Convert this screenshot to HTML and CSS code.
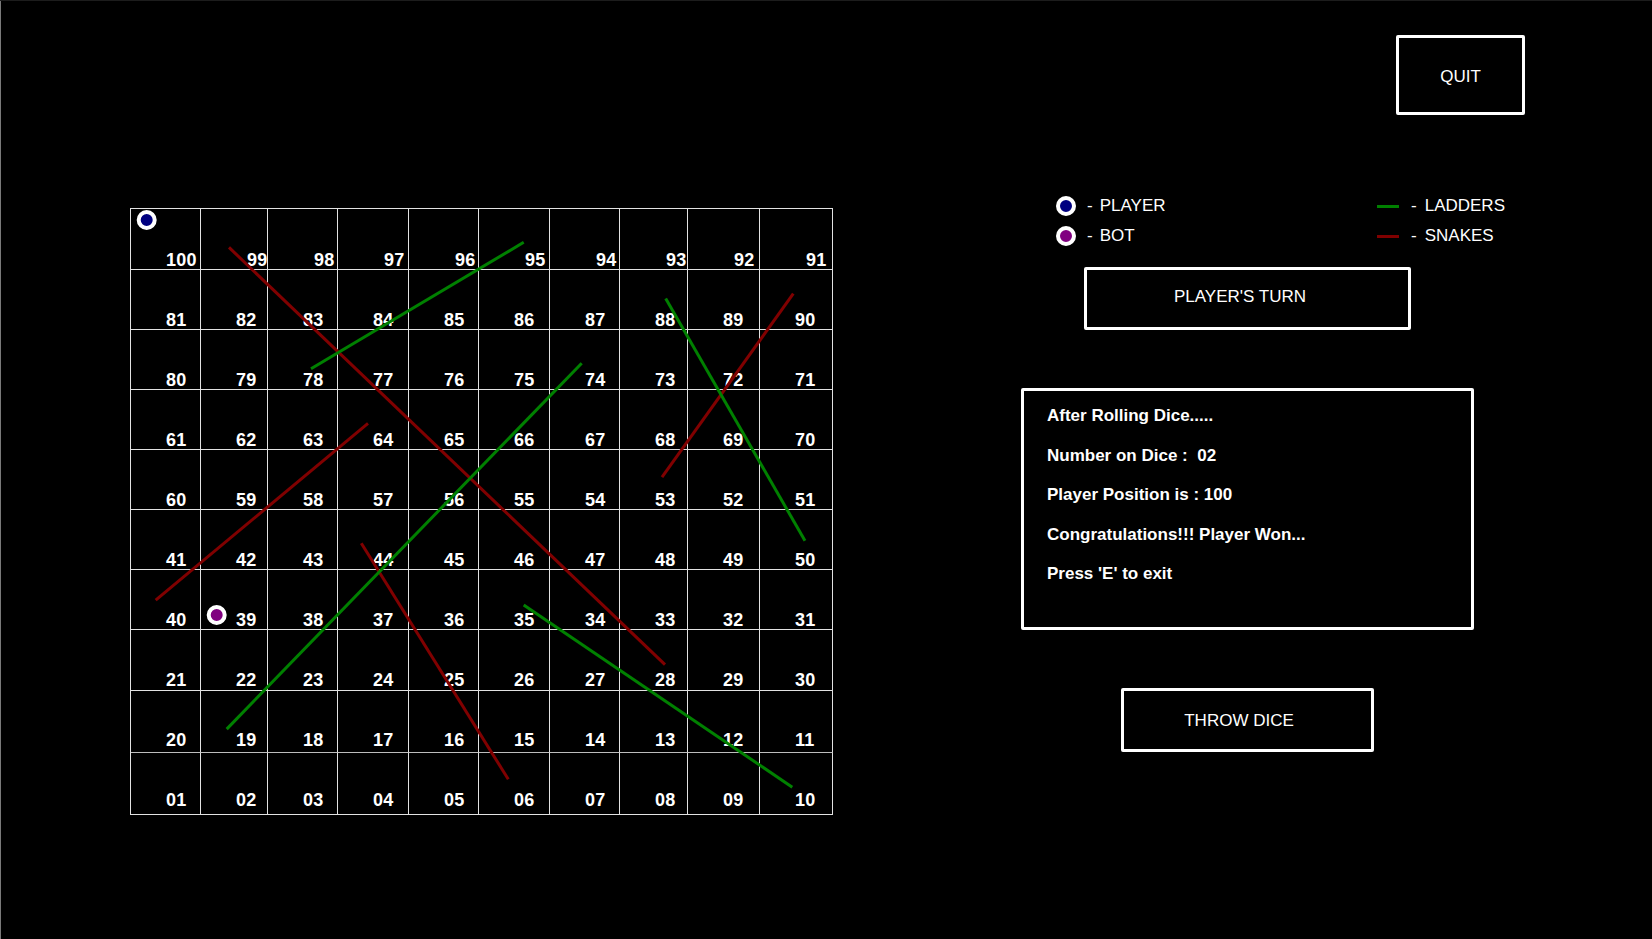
FILE: index.html
```html
<!DOCTYPE html>
<html>
<head>
<meta charset="utf-8">
<title>Snakes and Ladders</title>
<link rel="stylesheet" href="styles.css">
</head>
<body>
<div class="screen">
  <header class="topbar">
    <button class="btn quit">QUIT</button>
  </header>
  <main class="main">
    <section class="board-wrap">
      <div class="board">
        <div class="row r1">
          <div class="cell">100</div><div class="cell top">99</div><div class="cell top">98</div><div class="cell top">97</div><div class="cell top">96</div><div class="cell top">95</div><div class="cell top">94</div><div class="cell top">93</div><div class="cell top">92</div><div class="cell top">91</div>
        </div>
        <div class="row r2">
          <div class="cell">81</div><div class="cell">82</div><div class="cell">83</div><div class="cell">84</div><div class="cell">85</div><div class="cell">86</div><div class="cell">87</div><div class="cell">88</div><div class="cell">89</div><div class="cell">90</div>
        </div>
        <div class="row r3">
          <div class="cell">80</div><div class="cell">79</div><div class="cell">78</div><div class="cell">77</div><div class="cell">76</div><div class="cell">75</div><div class="cell">74</div><div class="cell">73</div><div class="cell">72</div><div class="cell">71</div>
        </div>
        <div class="row r4">
          <div class="cell">61</div><div class="cell">62</div><div class="cell">63</div><div class="cell">64</div><div class="cell">65</div><div class="cell">66</div><div class="cell">67</div><div class="cell">68</div><div class="cell">69</div><div class="cell">70</div>
        </div>
        <div class="row r5">
          <div class="cell">60</div><div class="cell">59</div><div class="cell">58</div><div class="cell">57</div><div class="cell">56</div><div class="cell">55</div><div class="cell">54</div><div class="cell">53</div><div class="cell">52</div><div class="cell">51</div>
        </div>
        <div class="row r6">
          <div class="cell">41</div><div class="cell">42</div><div class="cell">43</div><div class="cell">44</div><div class="cell">45</div><div class="cell">46</div><div class="cell">47</div><div class="cell">48</div><div class="cell">49</div><div class="cell">50</div>
        </div>
        <div class="row r7">
          <div class="cell">40</div><div class="cell">39</div><div class="cell">38</div><div class="cell">37</div><div class="cell">36</div><div class="cell">35</div><div class="cell">34</div><div class="cell">33</div><div class="cell">32</div><div class="cell">31</div>
        </div>
        <div class="row r8">
          <div class="cell">21</div><div class="cell">22</div><div class="cell">23</div><div class="cell">24</div><div class="cell">25</div><div class="cell">26</div><div class="cell">27</div><div class="cell">28</div><div class="cell">29</div><div class="cell">30</div>
        </div>
        <div class="row r9">
          <div class="cell">20</div><div class="cell">19</div><div class="cell">18</div><div class="cell">17</div><div class="cell">16</div><div class="cell">15</div><div class="cell">14</div><div class="cell">13</div><div class="cell">12</div><div class="cell">11</div>
        </div>
        <div class="row r10">
          <div class="cell">01</div><div class="cell">02</div><div class="cell">03</div><div class="cell">04</div><div class="cell">05</div><div class="cell">06</div><div class="cell">07</div><div class="cell">08</div><div class="cell">09</div><div class="cell">10</div>
        </div>
      </div>
      <svg class="overlay" viewBox="130 208 703 607" width="703" height="607" xmlns="http://www.w3.org/2000/svg">
        <g class="snakes" stroke="#800000" stroke-width="3">
          <line x1="229" y1="247.4" x2="665" y2="664.6"/>
          <line x1="793.3" y1="293.7" x2="662" y2="477.2"/>
          <line x1="368" y1="423.4" x2="155.7" y2="600.2"/>
          <line x1="361.3" y1="543.2" x2="508.3" y2="779.3"/>
        </g>
        <g class="ladders" stroke="#008000" stroke-width="3">
          <line x1="311" y1="368.8" x2="523.7" y2="242.3"/>
          <line x1="665.7" y1="298.5" x2="805" y2="540.8"/>
          <line x1="581.7" y1="363.3" x2="226.7" y2="729.1"/>
          <line x1="523.7" y1="604.9" x2="792.3" y2="787.2"/>
        </g>
        <circle cx="146.7" cy="220" r="8" fill="#000080" stroke="#ffffff" stroke-width="4"/>
        <circle cx="216.7" cy="615" r="8" fill="#800080" stroke="#ffffff" stroke-width="4"/>
      </svg>
    </section>
    <aside class="panel">
      <div class="legend">
        <div class="legend-item"><span class="token player"></span><span class="dash">-</span><span class="legend-label">PLAYER</span></div>
        <div class="legend-item"><span class="swatch ladder"></span><span class="dash wide">-</span><span class="legend-label">LADDERS</span></div>
        <div class="legend-item"><span class="token bot"></span><span class="dash">-</span><span class="legend-label">BOT</span></div>
        <div class="legend-item"><span class="swatch snake"></span><span class="dash wide">-</span><span class="legend-label">SNAKES</span></div>
      </div>
      <div class="box turn">PLAYER'S TURN</div>
      <div class="info">
        <div class="info-line">After Rolling Dice.....</div>
        <div class="info-line">Number on Dice :  02</div>
        <div class="info-line">Player Position is : 100</div>
        <div class="info-line">Congratulations!!! Player Won...</div>
        <div class="info-line">Press 'E' to exit</div>
      </div>
      <button class="btn throw">THROW DICE</button>
    </aside>
  </main>
</div>
</body>
</html>
```

FILE: styles.css
```css
html, body {
  margin: 0;
  padding: 0;
  background: #000000;
}

.screen {
  width: 1652px;
  height: 939px;
  overflow: hidden;
  background: #000000;
  box-shadow: inset 0 1px 0 #1c1c1c, inset 1px 0 0 #7a7a7a;
  color: #ffffff;
  font-family: "Liberation Sans", Arial, sans-serif;
  font-size: 17px;
}

.topbar {
  padding-top: 35px;
  padding-left: 1396px;
  height: 80px;
}

.btn {
  display: flex;
  align-items: center;
  justify-content: center;
  box-sizing: border-box;
  margin: 0;
  background: #000000;
  color: #ffffff;
  border: 3px solid #ffffff;
  border-radius: 2px;
  font-family: "Liberation Sans", Arial, sans-serif;
  font-size: 17px;
  cursor: pointer;
}

.quit {
  width: 129px;
  height: 80px;
  padding: 4px 0 0 0;
}

.main {
  display: flex;
  align-items: flex-start;
  margin-top: 81px;
}

.board-wrap {
  position: relative;
  margin-left: 130px;
  margin-top: 12px;
}

.board {
  display: flex;
  flex-direction: column;
  border-left: 1px solid #e2e2e2;
  border-top: 1px solid #e2e2e2;
  width: 702px;
}

.row {
  display: grid;
  grid-template-columns: 70px 67px 70px 71px 70px 71px 70px 68px 72px 73px;
  height: 60px;
}

.r3, .r8 { height: 61px; }
.r9, .r10 { height: 62px; }
.r9 .cell { border-bottom-color: #bdbdbd; }

.cell {
  box-sizing: border-box;
  border-right: 1px solid #e2e2e2;
  border-bottom: 1px solid #e2e2e2;
  padding-top: 42px;
  padding-left: 35px;
  font-family: "Liberation Sans", Arial, sans-serif;
  font-weight: bold;
  font-size: 18px;
  line-height: 18px;
  letter-spacing: 0.2px;
  color: #ffffff;
  white-space: nowrap;
}

.r4 .cell, .r5 .cell, .r6 .cell, .r7 .cell, .r8 .cell { padding-top: 41px; }
.r9 .cell { padding-top: 40px; }
.r10 .cell { padding-top: 38px; }

.cell.top { padding-left: 46px; }

.overlay {
  position: absolute;
  left: 0;
  top: 0;
  pointer-events: none;
}

.panel {
  margin-left: 188px;
  width: 454px;
}

.legend {
  display: grid;
  grid-template-columns: 321px auto;
  row-gap: 10px;
  padding-left: 35px;
}

.legend-item {
  display: flex;
  align-items: center;
  height: 20px;
  white-space: nowrap;
}

.token {
  display: block;
  box-sizing: border-box;
  width: 20px;
  height: 20px;
  border-radius: 50%;
  border: 4px solid #ffffff;
}

.token.player { background: #000080; }
.token.bot { background: #800080; }

.swatch {
  display: block;
  width: 22px;
  height: 3px;
}

.swatch.ladder { background: #008000; }
.swatch.snake { background: #800000; }

.dash {
  margin-left: 11px;
}

.dash.wide {
  margin-left: 12px;
}

.legend-label {
  margin-left: 7px;
}

.dash.wide + .legend-label {
  margin-left: 8px;
}

.box {
  display: flex;
  align-items: center;
  justify-content: center;
  box-sizing: border-box;
  border: 3px solid #ffffff;
  border-radius: 2px;
}

.turn {
  margin-top: 21px;
  margin-left: 63px;
  width: 327px;
  height: 63px;
  padding: 0 15px 4px 0;
}

.info {
  box-sizing: border-box;
  margin-top: 58px;
  width: 453px;
  height: 242px;
  border: 3px solid #ffffff;
  border-radius: 2px;
  padding: 5px 0 0 23px;
  font-weight: bold;
  font-size: 17px;
  line-height: 39.6px;
}

.info-line {
  white-space: pre;
}

.throw {
  margin-top: 58px;
  margin-left: 100px;
  width: 253px;
  height: 64px;
  padding: 2px 17px 0 0;
}
```
